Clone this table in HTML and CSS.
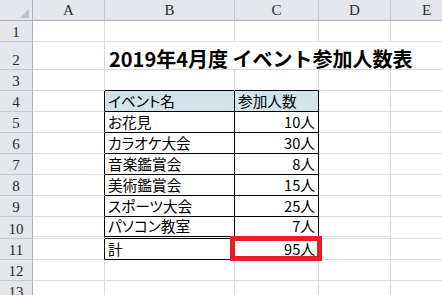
FILE: index.html
```html
<!DOCTYPE html>
<html lang="ja">
<head>
<meta charset="utf-8">
<link rel="stylesheet" href="styles.css">
</head>
<body>
<div class="sheet">
<table class="grid">
<colgroup>
<col class="c-rh"><col class="c-a"><col class="c-b"><col class="c-c"><col class="c-d"><col class="c-e">
</colgroup>
<thead>
<tr class="r-head">
<th class="corner"><svg class="tri" width="9" height="9" viewBox="0 0 9 9"><polygon points="9,0 9,9 0,9" fill="#bcc1c7"/></svg></th>
<th class="colh">A</th><th class="colh">B</th><th class="colh">C</th><th class="colh">D</th><th class="colh">E</th>
</tr>
</thead>
<tbody>
<tr class="r"><th class="rowh">1</th><td></td><td></td><td></td><td></td><td></td></tr>
<tr class="r r-title"><th class="rowh">2</th><td></td><td class="title nob">2019年4月度 イベント参加人数表</td><td class="nob"></td><td class="nob"></td><td></td></tr>
<tr class="r"><th class="rowh">3</th><td></td><td class="above"></td><td class="above"></td><td></td><td></td></tr>
<tr class="r"><th class="rowh">4</th><td class="left"></td><td class="tb th-cell">イベント名</td><td class="tb th-cell">参加人数</td><td></td><td></td></tr>
<tr class="r"><th class="rowh">5</th><td class="left"></td><td class="tb">お花見</td><td class="tb num">10人</td><td></td><td></td></tr>
<tr class="r"><th class="rowh">6</th><td class="left"></td><td class="tb">カラオケ大会</td><td class="tb num">30人</td><td></td><td></td></tr>
<tr class="r"><th class="rowh">7</th><td class="left"></td><td class="tb">音楽鑑賞会</td><td class="tb num">8人</td><td></td><td></td></tr>
<tr class="r"><th class="rowh">8</th><td class="left"></td><td class="tb">美術鑑賞会</td><td class="tb num">15人</td><td></td><td></td></tr>
<tr class="r"><th class="rowh">9</th><td class="left"></td><td class="tb">スポーツ大会</td><td class="tb num">25人</td><td></td><td></td></tr>
<tr class="r"><th class="rowh">10</th><td class="left dbl-l"></td><td class="tb dbl">パソコン教室</td><td class="tb dbl num">7人</td><td class="dbl-r"></td><td></td></tr>
<tr class="r"><th class="rowh">11</th><td class="left"></td><td class="tb">計</td><td class="tb num total">95人</td><td></td><td></td></tr>
<tr class="r"><th class="rowh">12</th><td></td><td></td><td></td><td></td><td></td></tr>
<tr class="r"><th class="rowh">13</th><td></td><td></td><td></td><td></td><td></td></tr>
</tbody>
</table>
</div>
</body>
</html>
```
FILE: styles.css
```css
html, body {
  margin: 0;
  padding: 0;
  background: #ffffff;
}
.sheet {
  width: 442px;
  height: 295px;
  overflow: hidden;
}
.grid {
  border-collapse: separate;
  border-spacing: 0;
  table-layout: fixed;
  width: 463px;
  font-family: "Noto Sans CJK JP", sans-serif;
  font-size: 14.67px;
  color: #000;
}
.c-rh { width: 33px; }
.c-a { width: 72px; }
.c-b { width: 130px; }
.c-c { width: 84px; }
.c-d { width: 72px; }
.c-e { width: 72px; }

.grid td, .grid th {
  box-sizing: border-box;
  padding: 0;
  border-right: 1px solid #dadada;
  border-bottom: 1px solid #dadada;
  white-space: nowrap;
  line-height: 18px;
}
.r-head th {
  height: 21px;
  background: #e3e6ea;
  border-right: 1px solid #c3c8ce;
  border-bottom: 1px solid #a9b1ba;
  font-family: "Liberation Serif", "DejaVu Serif", serif;
  font-weight: normal;
  font-size: 15px;
  color: #2d2d2d;
  text-align: center;
  vertical-align: middle;
}
.r-head th.corner {
  border-right: 1px solid #a9b1ba;
  text-align: right;
  vertical-align: bottom;
  padding: 0 3px 2px 0;
  line-height: 0;
}
.rowh {
  background: #e3e6ea;
  border-right: 1px solid #a9b1ba !important;
  border-bottom: 1px solid #c3c8ce !important;
  font-family: "Liberation Serif", "DejaVu Serif", serif;
  font-weight: normal;
  font-size: 15px;
  color: #2d2d2d;
  text-align: center;
  vertical-align: bottom;
}
.r { height: 21px; }
.r-title { height: 28px; }
.grid td { vertical-align: bottom; padding: 0 3px 1px 3px; }

.title {
  font-weight: bold;
  font-size: 20px;
  line-height: 24px;
  overflow: visible;
  padding-left: 4px !important;
}
.nob { border-right: 0 !important; }
.above { border-bottom: 1px solid #000 !important; }
.left { border-right: 1px solid #000 !important; }
.tb {
  border-right: 1px solid #000 !important;
  border-bottom: 1px solid #000 !important;
  font-feature-settings: "palt" 1;
}
.th-cell { background: #d3e3ea; }
.num { text-align: right; }
.dbl { border-bottom: 3px double #000 !important; }
.dbl-l, .dbl-r { border-bottom-width: 3px !important; border-bottom-style: double !important; border-bottom-color: #dadada !important; }
.total { position: relative; }
.total::after {
  content: "";
  position: absolute;
  left: -5px;
  top: -3px;
  width: 92px;
  height: 25px;
  box-sizing: border-box;
  border: 5px solid #ec1c24;
}
```
